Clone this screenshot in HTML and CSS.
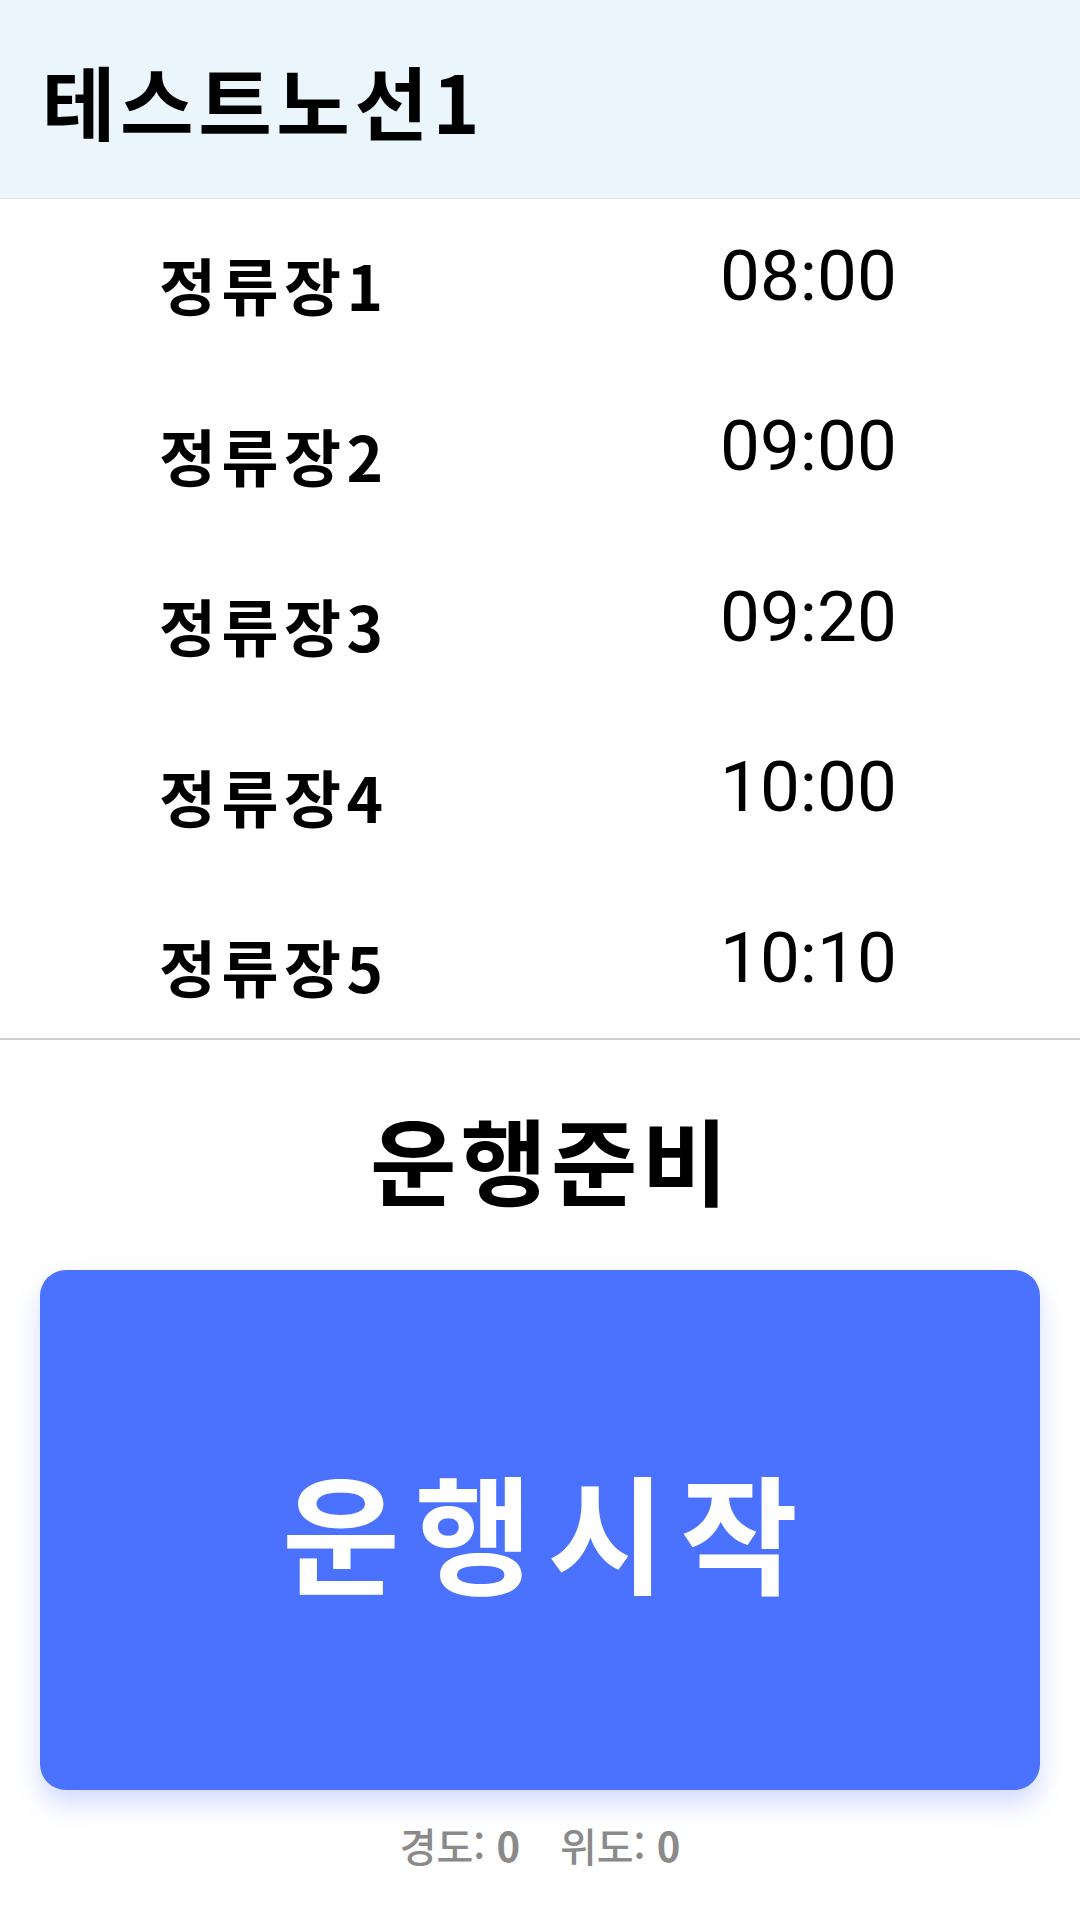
FILE: index.html
```html
<!DOCTYPE html>
<html lang="ko">
<head>
<meta charset="utf-8">
<title>테스트노선1</title>
<link rel="stylesheet" href="styles.css">
</head>
<body>
<div class="app">
  <header class="header">
    <h1 class="title">테스트노선1</h1>
  </header>
  <div class="stops-wrap">
    <ul class="stops">
      <li class="stop"><span class="stop-name">정류장1</span><span class="stop-time">08:00</span></li>
      <li class="stop"><span class="stop-name">정류장2</span><span class="stop-time">09:00</span></li>
      <li class="stop"><span class="stop-name">정류장3</span><span class="stop-time">09:20</span></li>
      <li class="stop"><span class="stop-name">정류장4</span><span class="stop-time">10:00</span></li>
      <li class="stop"><span class="stop-name">정류장5</span><span class="stop-time">10:10</span></li>
    </ul>
  </div>
  <section class="control">
    <div class="status">운행준비</div>
    <button class="start-btn" type="button">운행시작</button>
    <div class="coords"><span class="coord">경도: <b>0</b></span><span class="coord">위도: <b>0</b></span></div>
  </section>
</div>
</body>
</html>
```

FILE: styles.css
```css
* { box-sizing: border-box; }
html, body { margin: 0; padding: 0; background: #ffffff; }
body {
  font-family: "Noto Sans CJK KR", "Noto Sans", sans-serif;
  color: #000;
  width: 1080px;
  height: 1920px;
  overflow: hidden;
}
.header {
  height: 199px;
  background: #eaf5fc;
  border-bottom: 1px solid #dde5ea;
  display: flex;
  align-items: center;
  padding-left: 42px;
}
.title {
  margin: 0;
  font-size: 80px;
  font-weight: 700;
  line-height: 1;
  letter-spacing: 4.5px;
}
.stops-wrap {
  height: 841px;
  overflow: hidden;
  border-bottom: 2px solid #cfcfcf;
}
.stops {
  list-style: none;
  margin: 0;
  padding: 0;
}
.stop {
  height: 170.5px;
  display: flex;
  align-items: center;
}
.stop-name {
  width: 720px;
  padding-left: 159px;
  font-size: 62px;
  font-weight: 700;
  line-height: 1;
  letter-spacing: 5.5px;
}
.stop-time {
  font-family: "Roboto", "Noto Sans", sans-serif;
  font-size: 71px;
  font-weight: 400;
  line-height: 1;
  margin-top: -18px;
}
.control {
  display: flex;
  flex-direction: column;
  align-items: center;
}
.status {
  margin-top: 62px;
  font-size: 94px;
  font-weight: 700;
  line-height: 1.2;
  letter-spacing: 4px;
  padding-left: 22px;
}
.start-btn {
  margin-top: 55px;
  width: 1000px;
  height: 520px;
  border: none;
  border-radius: 26px;
  background: #4a72ff;
  color: #ffffff;
  font-family: "Noto Sans CJK KR", sans-serif;
  font-size: 128px;
  font-weight: 700;
  letter-spacing: 15px;
  padding: 0 0 0 15px;
  box-shadow: 0 14px 24px rgba(74, 114, 255, 0.25);
}
.coords {
  margin-top: 27px;
  display: flex;
  gap: 40px;
  color: #8a8a8a;
  font-size: 40px;
  font-weight: 500;
  line-height: 1.4;
}
.coord b { font-weight: 700; }
```
